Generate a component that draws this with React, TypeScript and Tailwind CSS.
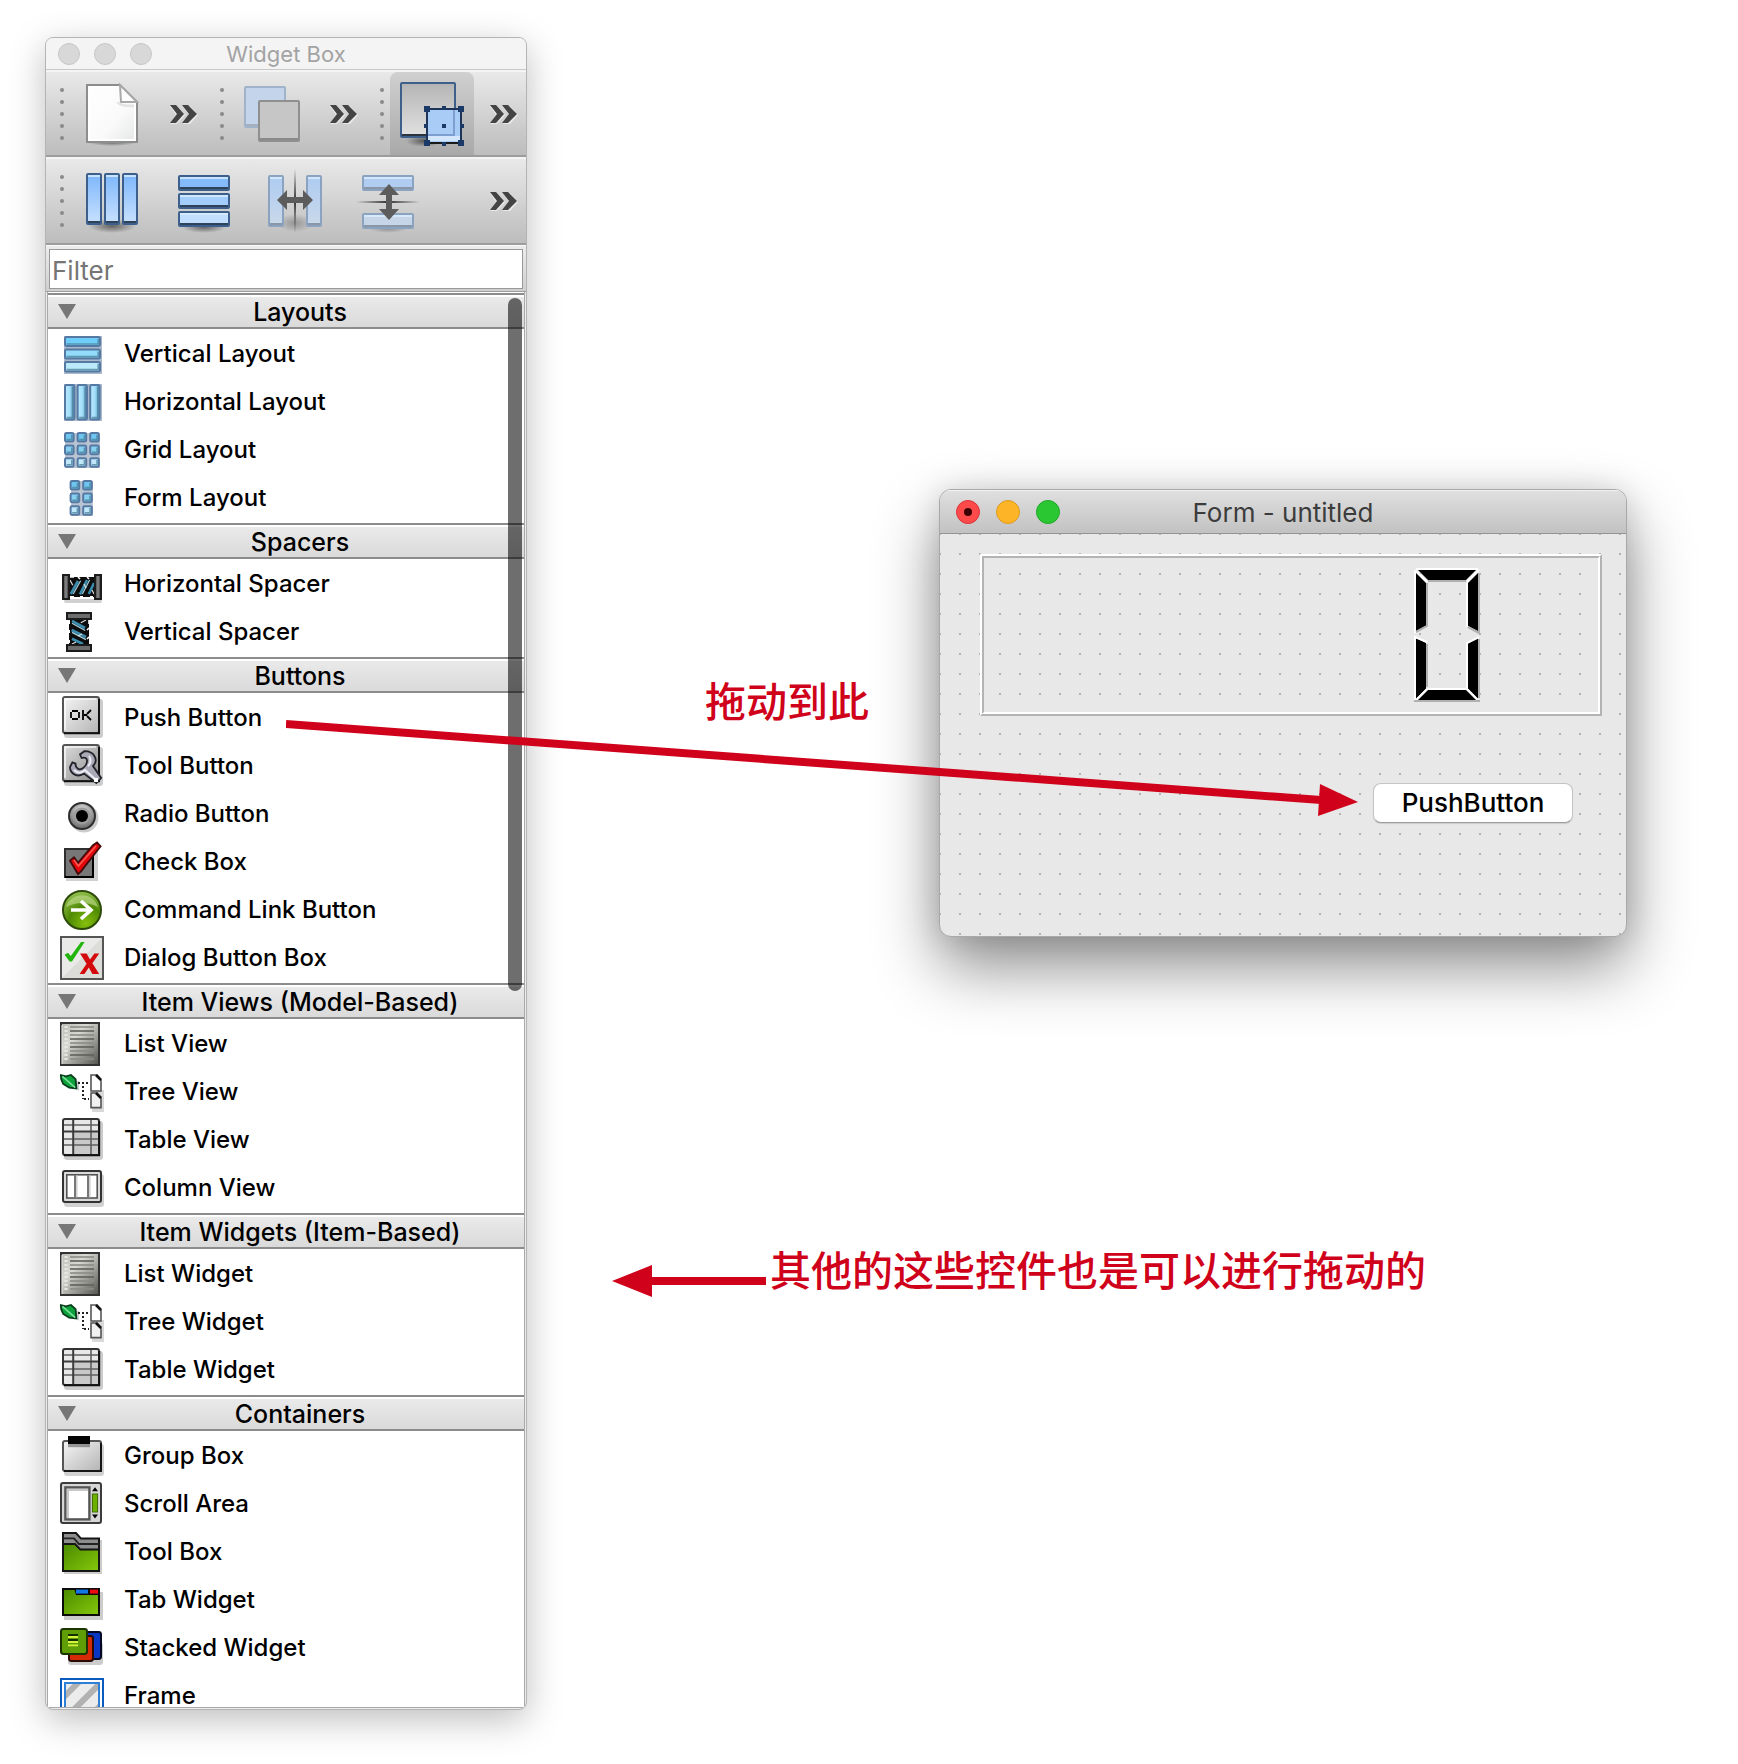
import type { ReactNode } from "react";

const Defs = () => (
  <svg width="0" height="0" className="absolute" aria-hidden="true">
    <defs>
      <linearGradient id="blueDeep" x1="0" y1="0" x2="0" y2="1">
        <stop offset="0" stopColor="#7db6fb" />
        <stop offset="1" stopColor="#c9e2fe" />
      </linearGradient>
      <linearGradient id="bluePale" x1="0" y1="0" x2="0" y2="1">
        <stop offset="0" stopColor="#adcbf2" />
        <stop offset="1" stopColor="#cbd9ea" />
      </linearGradient>
      <linearGradient id="paper" x1="0" y1="0" x2="1" y2="1">
        <stop offset="0" stopColor="#ffffff" />
        <stop offset="0.6" stopColor="#fafafa" />
        <stop offset="1" stopColor="#e4e6e6" />
      </linearGradient>
      <linearGradient id="greyFace" x1="0" y1="0" x2="0" y2="1">
        <stop offset="0" stopColor="#b4b4b4" />
        <stop offset="1" stopColor="#e2e2e2" />
      </linearGradient>
      <linearGradient id="face" x1="0" y1="0" x2="1" y2="1">
        <stop offset="0" stopColor="#f6f6f6" />
        <stop offset="1" stopColor="#b4b4b4" />
      </linearGradient>
      <linearGradient id="faceDark" x1="0" y1="0" x2="1" y2="1">
        <stop offset="0" stopColor="#dcdcdc" />
        <stop offset="1" stopColor="#8c8c8c" />
      </linearGradient>
      <linearGradient id="cyanAcross" x1="0" y1="0" x2="1" y2="0">
        <stop offset="0" stopColor="#b8ecff" />
        <stop offset="0.5" stopColor="#a4defa" />
        <stop offset="1" stopColor="#4e93bd" />
      </linearGradient>
      <linearGradient id="plate" x1="0" y1="0" x2="1" y2="0">
        <stop offset="0" stopColor="#3a3a3a" />
        <stop offset="0.5" stopColor="#8a8a8a" />
        <stop offset="1" stopColor="#2a2a2a" />
      </linearGradient>
      <linearGradient id="listFace" x1="0" y1="0" x2="1" y2="1">
        <stop offset="0" stopColor="#b9bab3" />
        <stop offset="0.35" stopColor="#d8d9d2" />
        <stop offset="1" stopColor="#50524b" />
      </linearGradient>
      <linearGradient id="green" x1="0" y1="0" x2="1" y2="1">
        <stop offset="0" stopColor="#4a8a00" />
        <stop offset="1" stopColor="#86c80a" />
      </linearGradient>
      <radialGradient id="knob" cx="0.5" cy="0.3" r="0.7">
        <stop offset="0" stopColor="#dedede" />
        <stop offset="1" stopColor="#6a6a6a" />
      </radialGradient>
      <radialGradient id="ball" cx="0.6" cy="0.85" r="0.9">
        <stop offset="0" stopColor="#86bf0c" />
        <stop offset="0.5" stopColor="#4f8a04" />
        <stop offset="1" stopColor="#9cc85a" />
      </radialGradient>
      <radialGradient id="shade">
        <stop offset="0" stopColor="#000" stopOpacity="0.5" />
        <stop offset="1" stopColor="#000" stopOpacity="0" />
      </radialGradient>
      <linearGradient id="fadeV" x1="0" y1="0" x2="0" y2="1">
        <stop offset="0" stopColor="#333" stopOpacity="0" />
        <stop offset="0.5" stopColor="#333" />
        <stop offset="1" stopColor="#333" stopOpacity="0" />
      </linearGradient>
      <linearGradient id="fadeH" x1="0" y1="0" x2="1" y2="0">
        <stop offset="0" stopColor="#333" stopOpacity="0" />
        <stop offset="0.5" stopColor="#333" />
        <stop offset="1" stopColor="#333" stopOpacity="0" />
      </linearGradient>
      <pattern id="hatch" width="8" height="8" patternUnits="userSpaceOnUse" patternTransform="rotate(45)">
        <rect width="8" height="8" fill="#ececec" />
        <rect width="3" height="8" fill="#b2b2b2" />
      </pattern>
    </defs>
  </svg>
);

/* ---------- toolbar icons, drawn on a 64 unit square ---------- */

const Big = ({ children }: { children: ReactNode }) => (
  <svg viewBox="0 0 64 64" className="h-16 w-16" aria-hidden="true">
    {children}
  </svg>
);

const bar = (x: number, y: number, w: number, h: number, fill: string, stroke: string, foot: string) => (
  <g key={x + "-" + y}>
    <rect x={x + 1} y={y + 1} width={w - 2} height={h - 2} rx="1" fill={fill} stroke={stroke} strokeWidth="2" />
    <rect x={x + 2} y={y + 2} width={w - 4} height="2" fill="#d8edff" opacity="0.8" />
    <rect x={x + 2} y={y + h - 4} width={w - 4} height="2" fill={foot} />
  </g>
);

const NewFile = () => (
  <Big>
    <ellipse cx="32" cy="60" rx="26" ry="4" fill="url(#shade)" />
    <path d="M7 3H40L57 20V60H7Z" fill="url(#paper)" stroke="#8d8d8d" strokeWidth="2" />
    <path d="M9 5H39L55 20V58H9Z" fill="none" stroke="#fff" strokeWidth="2" />
    <path d="M40 3L57 20H41Z" fill="#fdfdfd" stroke="#a9a9a9" strokeWidth="2" />
    <path d="M38 20Q39 24 54 24" fill="none" stroke="#e4e4e4" strokeWidth="3" />
  </Big>
);

const SendBack = () => (
  <Big>
    <rect x="5" y="5" width="40" height="40" rx="1" fill="#c4d4ea" stroke="#9fb3cb" strokeWidth="2" />
    <rect x="6" y="42" width="38" height="2" fill="#a6b0bd" />
    <rect x="19" y="19" width="40" height="40" rx="1" fill="#c6c6c6" stroke="#8f8f8f" strokeWidth="2" />
    <rect x="20" y="56" width="38" height="2" fill="#8a8a8a" />
  </Big>
);

const EditWidgets = () => (
  <Big>
    <ellipse cx="24" cy="59" rx="18" ry="6" fill="url(#shade)" />
    <rect x="1" y="1" width="54" height="54" rx="1" fill="url(#greyFace)" stroke="#3d5f8b" strokeWidth="2" />
    <rect x="2" y="52" width="52" height="2" fill="#2c3440" />
    <rect x="27" y="27" width="34" height="34" fill="#a9ccf7" stroke="#1d3358" strokeWidth="2" />
    <path d="M28 53H54V28" fill="none" stroke="#7d9ed0" strokeWidth="2" />
    <rect x="28" y="54" width="32" height="5" fill="#d3e6fc" />
    <path d="M27 61H61" stroke="#1a1a1a" strokeWidth="2" />
    <path
      d="M24 24h6v6h-6zM58 24h6v6h-6zM24 58h6v6h-6zM58 58h6v6h-6zM42 24h4v4h-4zM42 42h4v4h-4zM42 60h4v4h-4zM24 42h4v4h-4zM60 42h4v4h-4z"
      fill="#1c3a68"
    />
  </Big>
);

const LayH = () => (
  <Big>
    <ellipse cx="32" cy="57" rx="24" ry="7" fill="url(#shade)" />
    {[6, 24, 42].map((x) => bar(x, 4, 16, 52, "url(#blueDeep)", "#3d5f8b", "#2f4258"))}
  </Big>
);

const LayV = () => (
  <Big>
    <ellipse cx="32" cy="58" rx="22" ry="6" fill="url(#shade)" />
    {bar(6, 6, 52, 16, "#86bbfb", "#3d5f8b", "#2f4258")}
    {bar(6, 24, 52, 16, "#a3cdfc", "#3d5f8b", "#2f4258")}
    {bar(6, 42, 52, 16, "#c2defe", "#3d5f8b", "#2f4258")}
  </Big>
);

const SplitH = () => (
  <Big>
    <ellipse cx="31" cy="54" rx="18" ry="9" fill="url(#shade)" opacity="0.5" />
    {bar(4, 6, 16, 52, "url(#bluePale)", "#8ba2c0", "#8b97a6")}
    {bar(42, 6, 16, 52, "url(#bluePale)", "#8ba2c0", "#8b97a6")}
    <rect x="30" y="0" width="2" height="64" fill="url(#fadeV)" />
    <path d="M13 31L23 21V28H39V21L49 31L39 41V34H23V41Z" fill="#5c5c5c" />
  </Big>
);

const SplitV = () => (
  <Big>
    <ellipse cx="32" cy="59" rx="20" ry="5" fill="url(#shade)" opacity="0.6" />
    {bar(6, 6, 52, 16, "#b0ccf0", "#8ba2c0", "#8b97a6")}
    {bar(6, 44, 52, 16, "#c6d5e8", "#8ba2c0", "#8b97a6")}
    <rect x="0" y="32" width="64" height="2" fill="url(#fadeH)" />
    <path d="M33 15L43 26H36V40H43L33 51L23 40H30V26H23Z" fill="#5c5c5c" />
  </Big>
);

const Chevrons = () => (
  <svg viewBox="0 0 32 24" className="h-6 w-8" aria-hidden="true">
    <path d="M2 4H9L17 13L9 22H2L8 13ZM15 4H22L30 13L22 22H15L21 13Z" fill="#fff" opacity="0.55" />
    <path d="M2 3H8L16 12L8 21H2L9 12ZM14 3H20L29 12L20 21H14L21 12Z" fill="#444" />
  </svg>
);

/* ---------- list icons, drawn on a 22 unit square ---------- */

const cell = (x: number, y: number, w: number, h: number, fill: string) => (
  <g key={x + "-" + y}>
    <rect x={x} y={y} width={w} height={h} rx="0.7" fill={fill} stroke="#5679a3" strokeWidth="1" />
    <path d={`M${x + 0.8} ${y + h - 1}H${x + w - 0.9}V${y + 0.9}`} fill="none" stroke="#4b8199" strokeWidth="0.8" opacity="0.75" />
  </g>
);

const VLayout = () => (
  <>
    <rect x="2" y="2" width="19" height="19" fill="#a9b8ca" />
    {cell(2.5, 2.5, 17.5, 4.5, "#6fcdf9")}
    {cell(2.5, 8.8, 17.5, 4.5, "#93dbfb")}
    {cell(2.5, 15, 17.5, 4.8, "#bdeafb")}
  </>
);
const HLayout = () => (
  <>
    <rect x="2" y="2" width="19" height="18.5" fill="#a9b8ca" />
    {[2.5, 8.8, 15.1].map((x) => cell(x, 2.5, 4.7, 17.3, "url(#cyanAcross)"))}
  </>
);
const rowsOfCells = (xs: number[]) =>
  xs.flatMap((x) => [cell(x, 2.5, 4.3, 4.3, "#6cc6f0"), cell(x, 8.8, 4.3, 4.3, "#86d0f2"), cell(x, 15.1, 4.3, 4.3, "#bfe8fa")]);
const GridLayout = () => (
  <>
    <rect x="2.5" y="2.5" width="17.5" height="17.5" fill="#b9c4d2" />
    {rowsOfCells([2.5, 8.8, 15.1])}
  </>
);
const FormLayout = () => (
  <>
    <rect x="5.5" y="2.5" width="11" height="17.5" fill="#b9c4d2" />
    {rowsOfCells([5.3, 11.6])}
  </>
);

const coil = (
  <>
    <rect x="4" y="7.5" width="14" height="10" fill="#0d0d0d" />
    <path d="M5 7.5h2M9 7.5l1 1M13.5 7.5l1 1M5 17.4h2M10 17.4h1.5M15 17.4h1.5" stroke="#fff" strokeWidth="0.8" />
    <path d="M5.4 16L9 9.5M10 16.2L13.5 9M14.4 16L17 10.5" stroke="#3a8caf" strokeWidth="1.3" />
    <path d="M6.6 16L10.3 9.4M11.2 16L14.8 9" stroke="#a9cfdb" strokeWidth="0.6" />
    <path d="M5 9L6.4 11.6M12 11l1 2M16 14l1 2" stroke="#dcdcdc" strokeWidth="0.6" />
  </>
);
const HSpacer = () => (
  <>
    <rect x="2" y="18.5" width="19" height="2" rx="1" fill="#000" opacity="0.18" />
    {coil}
    <rect x="1.5" y="6.5" width="3" height="12" fill="url(#plate)" stroke="#1c1c1c" />
    <rect x="17.5" y="6.5" width="3" height="12" fill="url(#plate)" stroke="#1c1c1c" />
  </>
);
const VSpacer = () => (
  <g transform="translate(22 0) rotate(90)">
    {coil}
    <rect x="1.5" y="6.5" width="3" height="12" fill="#6c6c6c" stroke="#1c1c1c" />
    <rect x="17.5" y="6.5" width="3" height="12" fill="#6c6c6c" stroke="#1c1c1c" />
  </g>
);

const Raised = ({ fill = "url(#face)" }: { fill?: string }) => (
  <>
    <rect x="2" y="1.5" width="19.5" height="19.5" rx="1.5" fill="#000" opacity="0.2" />
    <rect x="1.5" y="0.5" width="18" height="18" rx="1" fill={fill} stroke="#555" />
    <path d="M2 18.6H19.5V1.5" fill="none" stroke="#111" />
    <path d="M2.5 17V1.5H18" fill="none" stroke="#fff" strokeWidth="0.8" opacity="0.8" />
  </>
);
const PushIcon = () => (
  <>
    <Raised />
    <path d="M6 7.5H9M6 11.5H9M5.5 8V11M9.5 8V11M11.5 7V12M12 9.5H13.5M13.5 9L15.5 7M13.5 10L15.5 12" fill="none" stroke="#000" strokeWidth="0.9" />
  </>
);
const ToolIcon = () => (
  <>
    <Raised fill="url(#faceDark)" />
    <path
      d="M5 11.5C5 15 9 17 12 14.8L18.2 19.5L20.6 17L16.5 11C19.5 8 17 3.5 12.2 3.6L10 5.2L10.8 7C14.5 5.8 14 10 11.8 11.8C9.5 13.8 7.5 11.8 7.8 9.8L6.2 9.2Z"
      fill="#a9a9b8"
      stroke="#23232b"
      strokeWidth="0.9"
    />
    <path d="M7 13C9 15 11 14.5 12.5 13L18 18M14.5 6C16 8 15 10 14 11.2" fill="none" stroke="#ececf4" strokeWidth="1" />
    <rect x="17" y="17" width="2" height="2" fill="#fff" />
  </>
);
const RadioIcon = () => (
  <>
    <circle cx="12" cy="13" r="7.2" fill="#000" opacity="0.2" />
    <circle cx="11" cy="12" r="6.5" fill="url(#knob)" stroke="#2e2e2e" />
    <circle cx="11" cy="12" r="4.2" fill="#9c9c9c" />
    <circle cx="11" cy="12" r="3" fill="#000" />
  </>
);
const CheckIcon = () => (
  <>
    <rect x="3" y="6" width="16" height="14.5" fill="#000" opacity="0.18" />
    <rect x="2.5" y="4.5" width="14" height="14" fill="#777" stroke="#2f2f2f" />
    <path d="M2.5 18.5H16.5V4.5" fill="none" stroke="#000" />
    <path d="M5 10.3L7 8.6L9 11.4L16.5 2.6L18.5 1.2L20.3 3.2L10.4 15.8L9 17Z" fill="#e3060c" stroke="#43090a" strokeWidth="0.9" />
    <path d="M7 10L9.2 13L18 3" fill="none" stroke="#ff5a50" strokeWidth="0.8" />
  </>
);
const CommandIcon = () => (
  <>
    <circle cx="11" cy="11" r="9.5" fill="url(#ball)" stroke="#2d4a0a" />
    <path d="M3 9.5A8.4 8.4 0 0 1 19 9.5Q11 5.5 3 9.5Z" fill="#c5de92" opacity="0.6" />
    <path d="M5.5 11H15.5M10.5 6.5L15.5 11L10.5 15.5" fill="none" stroke="#fff" strokeWidth="1.8" />
  </>
);
const DialogIcon = () => (
  <>
    <rect x="0.5" y="0.5" width="21" height="21" fill="#dcdcd9" stroke="#555" />
    <path d="M1 21V1H21Z" fill="#f4f4f2" opacity="0.6" />
    <path d="M2.3 9.4L4 8.4L5.4 10L10.5 3H12.3L6 12.8H4.8Z" fill="#22b50e" />
    <path d="M10 8.7H13.3L15 11.8L17.2 8.7H19.6L16.2 13.6L19.6 19H16.2L14.4 15.7L12.2 19H9.8L13.3 13.9Z" fill="#d3090c" />
  </>
);

const ListIcon = () => (
  <>
    <rect x="0.5" y="0.5" width="19" height="21" fill="url(#listFace)" stroke="#333" />
    <path d="M3 2V20" stroke="#e6e7e0" strokeWidth="1.6" strokeDasharray="1 1" />
    {[2.5, 4.5, 6.5, 8.5, 10.5, 12.5, 14.5, 16.5, 18.5].map((y) => (
      <path key={y} d={`M5 ${y}H17`} stroke={y % 4 === 0.5 ? "#5f615a" : "#8b8d85"} strokeWidth="0.8" />
    ))}
    <path d="M1 1.5V21" stroke="#e0e0da" strokeWidth="0.6" />
  </>
);
const TreeIcon = () => (
  <>
    <path d="M4 5.5L9.5 10.5L9.5 5.5Z" fill="#000" opacity="0.2" />
    <path d="M0.4 2.6L3 3.2L5.5 2.5L7.8 4.6L8.2 9.2L4.6 8.8L1.6 7L0.6 4.6Z" fill="#0da23c" stroke="#0a3d1c" strokeWidth="0.9" />
    <path d="M1.2 3.2L7.6 8.8" stroke="#7fe49c" strokeWidth="0.7" />
    <path d="M9 6.5H14.5M11.5 8V14.5M12 14.5H14.5" fill="none" stroke="#222" strokeDasharray="1 1" />
    <rect x="16" y="10" width="6" height="11" fill="#000" opacity="0.15" />
    <path d="M15.5 2.5H18.5L20.5 5V10.5H15.5Z" fill="#fff" stroke="#555" strokeWidth="0.8" />
    <path d="M18 2.5L20.5 5" stroke="#111" strokeWidth="1.3" />
    <path d="M15.5 11.5H18.5L20.5 14V18.8H15.5Z" fill="#f1f1f1" stroke="#555" strokeWidth="0.8" />
    <path d="M18 11.5L20.5 14" stroke="#111" strokeWidth="1.3" />
  </>
);
const TableIcon = () => (
  <>
    <rect x="2" y="1.5" width="19.5" height="19.5" rx="1.5" fill="#000" opacity="0.2" />
    <rect x="1.5" y="0.5" width="18" height="18" rx="1" fill="#e8e8e8" stroke="#333" />
    <rect x="7" y="7" width="12" height="11" fill="#c9c9c9" />
    <path d="M2 3.5H19M2 10.5H19M2 13.5H19M15.5 1V18" stroke="#5f5f5f" strokeWidth="0.8" />
    <path d="M2 6.8H19M6.6 1V18" stroke="#3c3c3c" strokeWidth="1" />
    <path d="M2 18.6H19.6V1.5" fill="none" stroke="#111" />
  </>
);
const ColumnIcon = () => (
  <>
    <rect x="2" y="4" width="20" height="16.5" rx="1.5" fill="#000" opacity="0.18" />
    <rect x="1.5" y="2.5" width="19" height="15.5" rx="1" fill="#dadada" stroke="#333" />
    <rect x="3.4" y="4.4" width="15.2" height="11.6" fill="#fff" stroke="#555" strokeWidth="0.8" />
    <path d="M7.5 4.5V16M14 4.5V16" stroke="#777" strokeWidth="1" />
    <path d="M8.4 4.8V15.6M14.9 4.8V15.6" stroke="#d0d0d0" strokeWidth="0.8" />
  </>
);
const GroupIcon = () => (
  <>
    <rect x="2" y="5" width="20" height="16" rx="1.5" fill="#000" opacity="0.18" />
    <rect x="1.5" y="3.5" width="19" height="15" rx="1" fill="url(#face)" stroke="#555" />
    <path d="M2 18.5H20.5V4.5" fill="none" stroke="#161616" />
    <rect x="4" y="5" width="11" height="1.6" fill="#000" opacity="0.35" />
    <rect x="4" y="1" width="11" height="4" fill="#050505" />
  </>
);
const ScrollIcon = () => (
  <>
    <rect x="0.5" y="0.5" width="20" height="20" rx="1" fill="#d6d6d6" stroke="#3c3c3c" />
    <rect x="2.7" y="2.7" width="12" height="16" fill="#fff" stroke="#555" strokeWidth="1.2" />
    <path d="M4 18V4H14" fill="none" stroke="#c8c8c8" />
    <path d="M16 4.6L17.5 2.6L19 4.6ZM16 16.2H19L17.5 18.2Z" fill="#000" />
    <rect x="16.2" y="6" width="2.6" height="9" fill="#6cb000" stroke="#3c6a00" strokeWidth="0.5" />
  </>
);
const ToolBoxIcon = () => (
  <>
    <rect x="2" y="5" width="19" height="17" fill="#000" opacity="0.2" />
    <path d="M1.5 1.5H8L10.5 4.3H19.5V20.5H1.5Z" fill="#8d8d8d" stroke="#151515" />
    <path d="M1.5 4.2H7L9.5 7H19.5" fill="none" stroke="#222" strokeWidth="0.9" />
    <path d="M1.5 7H7.5L10.2 9.8H19.5V20.5H1.5Z" fill="url(#green)" stroke="#151515" />
  </>
);
const TabIcon = () => (
  <>
    <rect x="2" y="7" width="19.5" height="14" fill="#000" opacity="0.2" />
    <rect x="1.5" y="5.5" width="18" height="13" fill="url(#green)" stroke="#0b0b0b" />
    <path d="M7 5H20V8.5H8Z" fill="#0b0b0b" />
    <rect x="8" y="5.8" width="6" height="2" fill="#1278e6" />
    <rect x="15" y="5.8" width="4" height="2" fill="#f00a12" />
  </>
);
const StackIcon = () => (
  <>
    <rect x="4" y="8" width="17.5" height="11.5" rx="1.5" fill="#000" opacity="0.2" />
    <rect x="8.5" y="3" width="12" height="13.5" rx="1.2" fill="#0a36c4" stroke="#040a26" />
    <rect x="4.5" y="5" width="12" height="12.5" rx="1.2" fill="#d42a06" stroke="#2c0a04" />
    <rect x="0.5" y="1.5" width="13" height="12.5" rx="1.2" fill="#5f9e06" stroke="#1c3302" />
    <path d="M4 4.5H9M4 7H9" stroke="#123000" strokeWidth="0.9" />
    <path d="M4 5.5H9M4 8H9M4 9.7H9" stroke="#d2f23c" strokeWidth="0.9" />
  </>
);
const FrameIcon = () => (
  <>
    <rect x="0.5" y="2.5" width="21" height="21" fill="#fff" stroke="#0a5bc0" />
    <rect x="2.5" y="4.5" width="17" height="17" fill="url(#hatch)" stroke="#2f7fd6" />
  </>
);

type Item = [string, () => ReactNode];
const groups: { title: string; items: Item[] }[] = [
  {
    title: "Layouts",
    items: [["Vertical Layout", VLayout], ["Horizontal Layout", HLayout], ["Grid Layout", GridLayout], ["Form Layout", FormLayout]],
  },
  { title: "Spacers", items: [["Horizontal Spacer", HSpacer], ["Vertical Spacer", VSpacer]] },
  {
    title: "Buttons",
    items: [
      ["Push Button", PushIcon],
      ["Tool Button", ToolIcon],
      ["Radio Button", RadioIcon],
      ["Check Box", CheckIcon],
      ["Command Link Button", CommandIcon],
      ["Dialog Button Box", DialogIcon],
    ],
  },
  {
    title: "Item Views (Model-Based)",
    items: [["List View", ListIcon], ["Tree View", TreeIcon], ["Table View", TableIcon], ["Column View", ColumnIcon]],
  },
  { title: "Item Widgets (Item-Based)", items: [["List Widget", ListIcon], ["Tree Widget", TreeIcon], ["Table Widget", TableIcon]] },
  {
    title: "Containers",
    items: [
      ["Group Box", GroupIcon],
      ["Scroll Area", ScrollIcon],
      ["Tool Box", ToolBoxIcon],
      ["Tab Widget", TabIcon],
      ["Stacked Widget", StackIcon],
      ["Frame", FrameIcon],
    ],
  },
];

const layoutTools: [string, () => ReactNode][] = [
  ["Lay out horizontally", LayH],
  ["Lay out vertically", LayV],
  ["Lay out horizontally in splitter", SplitH],
  ["Lay out vertically in splitter", SplitV],
];

const Handle = () => (
  <div className="flex w-1 flex-col gap-2">
    {[0, 1, 2, 3, 4].map((i) => (
      <span key={i} className="h-1 w-1 rounded-full bg-[#8a8a8a]" />
    ))}
  </div>
);

const More = () => (
  <button type="button" aria-label="More tools" className="flex h-10 w-8 items-center">
    <Chevrons />
  </button>
);

function ToolSegment({ label, active, children }: { label: string; active?: boolean; children: ReactNode }) {
  return (
    <div className="flex flex-1 items-center pl-[14px]">
      <Handle />
      <button
        type="button"
        aria-label={label}
        className={
          active
            ? "ml-[6px] flex h-full w-[84px] items-center justify-center rounded-t-lg bg-linear-to-b from-[#d0d0d0] to-[#a9a9a9]"
            : "ml-[6px] flex h-full w-[84px] items-center justify-center"
        }
      >
        {children}
      </button>
      <div className="ml-[14px]">
        <More />
      </div>
    </div>
  );
}

function WidgetBox() {
  return (
    <aside className="mt-[37px] mb-[54px] ml-[45px] flex w-[482px] shrink-0 flex-col overflow-hidden rounded-lg border border-[#b4b4b4] bg-[#ececec] shadow-[0_10px_36px_rgba(0,0,0,0.26)]">
      <header className="flex h-8 shrink-0 items-center border-b border-[#c8c8c8] bg-[#f4f4f4] px-3">
        <div className="flex gap-[14px]">
          {["Close", "Minimise", "Zoom"].map((n) => (
            <button key={n} type="button" aria-label={n} className="h-[22px] w-[22px] rounded-full border border-[#c6c6c6] bg-[#d8d8d8]" />
          ))}
        </div>
        <h1 className="flex-1 pt-px pr-[94px] text-center text-[22px] leading-[30px] text-[#a3a3a3]">Widget Box</h1>
      </header>

      <div className="flex h-[87px] shrink-0 border-t-2 border-b-2 border-t-[#f4f4f4] border-b-[#9c9c9c] bg-linear-to-b from-[#e9e9e9] to-[#bdbdbd]">
        <ToolSegment label="New form">
          <NewFile />
        </ToolSegment>
        <ToolSegment label="Send to back">
          <SendBack />
        </ToolSegment>
        <ToolSegment label="Edit widgets" active>
          <EditWidgets />
        </ToolSegment>
      </div>

      <div className="flex h-[88px] shrink-0 items-center border-t-2 border-b-2 border-t-[#f4f4f4] border-b-[#9c9c9c] bg-linear-to-b from-[#e9e9e9] to-[#bdbdbd] pr-[6px] pl-[14px]">
        <Handle />
        <div className="ml-[6px] flex h-full flex-1 gap-2">
          {layoutTools.map(([label, Icon]) => (
            <button key={label} type="button" aria-label={label} className="flex h-full w-[84px] items-center justify-center">
              <Icon />
            </button>
          ))}
        </div>
        <More />
      </div>

      <div className="shrink-0 border-t border-b border-t-[#fafafa] border-b-[#9c9c9c] bg-linear-to-b from-[#ececec] to-[#cfcfcf] px-[3px] pt-[3px] pb-[2px]">
        <input
          type="text"
          aria-label="Filter"
          placeholder="Filter"
          className="block h-10 w-full border border-[#989898] bg-white px-[2px] pt-[3px] text-[26px] text-black outline-none placeholder:text-[#757575]"
        />
      </div>

      <div className="relative mx-px mb-px min-h-0 flex-1 overflow-hidden border-x border-b border-[#a8a8a8] bg-white pt-px">
        {groups.map(({ title, items }) => (
          <section key={title}>
            <h2>
              <button
                type="button"
                aria-expanded="true"
                className="flex h-9 w-full items-center border-t-2 border-b-2 border-[#8c8c8c] bg-linear-to-b from-[#ebebeb] to-[#dadada] pl-[10px] shadow-[inset_0_2px_0_#ffffff]"
              >
                <svg viewBox="0 0 18 15" className="h-[15px] w-[18px]" aria-hidden="true">
                  <path d="M0 0H18L9 15Z" fill="#777" />
                </svg>
                <span className="flex-1 pt-[2px] text-center text-[25px] leading-[30px] font-medium text-black">{title}</span>
              </button>
            </h2>
            <ul className="py-px">
              {items.map(([label, Icon]) => (
                <li key={label} className="flex h-12 items-center gap-5 pl-3">
                  <svg viewBox="0 0 22 22" className="h-11 w-11 shrink-0" aria-hidden="true">
                    <Icon />
                  </svg>
                  <span className="text-[24px] leading-[22px] font-medium text-black">{label}</span>
                </li>
              ))}
            </ul>
          </section>
        ))}
        <div className="absolute top-[6px] right-[2px] h-[693px] w-[14px] rounded-full bg-black/57" />
      </div>
    </aside>
  );
}

const Digit = () => (
  <svg viewBox="0 0 66 134" className="h-[134px] w-[66px]" role="img" aria-label="0">
    <g fill="#000">
      <path d="M4 2H62L52 12H14Z" />
      <path d="M2 5L12 15V58L2 63Z" />
      <path d="M64 5L54 15V58L64 63Z" />
      <path d="M2 70L12 75V121L2 131Z" />
      <path d="M64 70L54 75V121L64 131Z" />
      <path d="M14 122H52L62 132H4Z" />
    </g>
    <g fill="none" stroke="#fff" strokeWidth="2">
      <path d="M2 1H64M1 3V65M1 2L13 14M53 15V59M53 14L65 2M1 133V69L13 74M53 121V75L65 69M13 121H53M13 121L2 132M53 121L64 132" />
    </g>
    <g fill="none" stroke="#b0b0b0" strokeWidth="2">
      <path d="M14 13H52M13 15V58L2 64M65 5V65L54 59M13 76V119M65 71V130M0 133H66" />
    </g>
  </svg>
);

function FormWindow() {
  return (
    <div className="flex h-[448px] w-[688px] shrink-0 flex-col overflow-hidden rounded-xl border border-[#a8a8a8] bg-[#e8e8e8] shadow-[0_30px_64px_rgba(0,0,0,0.45),0_0_30px_rgba(0,0,0,0.12)]">
      <header className="flex h-11 items-center border-b border-b-[#949494] bg-linear-to-b from-[#e0e0e0] to-[#c2c2c2] pl-4 shadow-[inset_0_1px_0_#f2f2f2]">
        <div className="flex gap-4">
          <button type="button" aria-label="Close" className="flex h-6 w-6 items-center justify-center rounded-full border border-[#e0343a] bg-[#fd4a4b]">
            <span className="h-2 w-2 rounded-full bg-[#3c0000]" />
          </button>
          <button type="button" aria-label="Minimise" className="h-6 w-6 rounded-full border border-[#dc9a24] bg-[#fdb427]" />
          <button type="button" aria-label="Zoom" className="h-6 w-6 rounded-full border border-[#1fa824] bg-[#2ac733]" />
        </div>
        <h2 className="flex-1 pt-[2px] pr-[120px] text-center text-[26px] leading-[32px] text-[#3c3c3c]">Form - untitled</h2>
      </header>
      <div className="flex flex-1 flex-col bg-[conic-gradient(from_270deg_at_2px_2px,#b3b3b3_90deg,transparent_90deg)] bg-[length:20px_20px] bg-[position:-1px_-1px] pt-5 pr-6 pl-10">
        <div className="border-2 border-t-white border-r-[#b3b3b3] border-b-[#b3b3b3] border-l-white">
          <div className="flex h-[158px] justify-end border-2 border-t-[#b3b3b3] border-r-white border-b-white border-l-[#b3b3b3] pt-[10px] pr-[118px]">
            <Digit />
          </div>
        </div>
        <button
          type="button"
          className="mt-[67px] mr-[29px] h-10 w-[200px] self-end rounded-lg border border-[#c4c4c4] border-b-[#9c9c9c] bg-white text-[26px] leading-[36px] font-medium text-black shadow-[0_1px_1px_rgba(0,0,0,0.12)]"
        >
          PushButton
        </button>
      </div>
    </div>
  );
}

export default function App() {
  return (
    <main className="relative flex h-screen overflow-hidden bg-white font-['Inter','Noto_Sans_CJK_SC',sans-serif]">
      <Defs />
      <WidgetBox />
      <section className="min-w-0 flex-1 pt-[489px]">
        <div className="flex items-start justify-between pr-[111px] pl-[178px]">
          <p className="mt-[189px] text-[41px] leading-[48px] font-medium whitespace-nowrap text-[#d0021b]">拖动到此</p>
          <FormWindow />
        </div>
        <div className="mt-[310px] flex items-start gap-1 pl-[85px]">
          <svg viewBox="0 0 154 32" className="mt-[18px] h-8 w-[154px] shrink-0" aria-hidden="true">
            <path d="M0 16L40 0V12H154V20H40V32Z" fill="#d0021b" />
          </svg>
          <p className="text-[41px] leading-[48px] font-medium whitespace-nowrap text-[#d0021b]">其他的这些控件也是可以进行拖动的</p>
        </div>
      </section>
      <svg viewBox="0 0 1072 104" className="pointer-events-none absolute top-[716px] left-[286px] h-[104px] w-[1072px]" aria-hidden="true">
        <path d="M0 8L1035 84" stroke="#d0021b" strokeWidth="8" />
        <path d="M1072 86L1034 68L1032 100Z" fill="#d0021b" />
      </svg>
    </main>
  );
}
